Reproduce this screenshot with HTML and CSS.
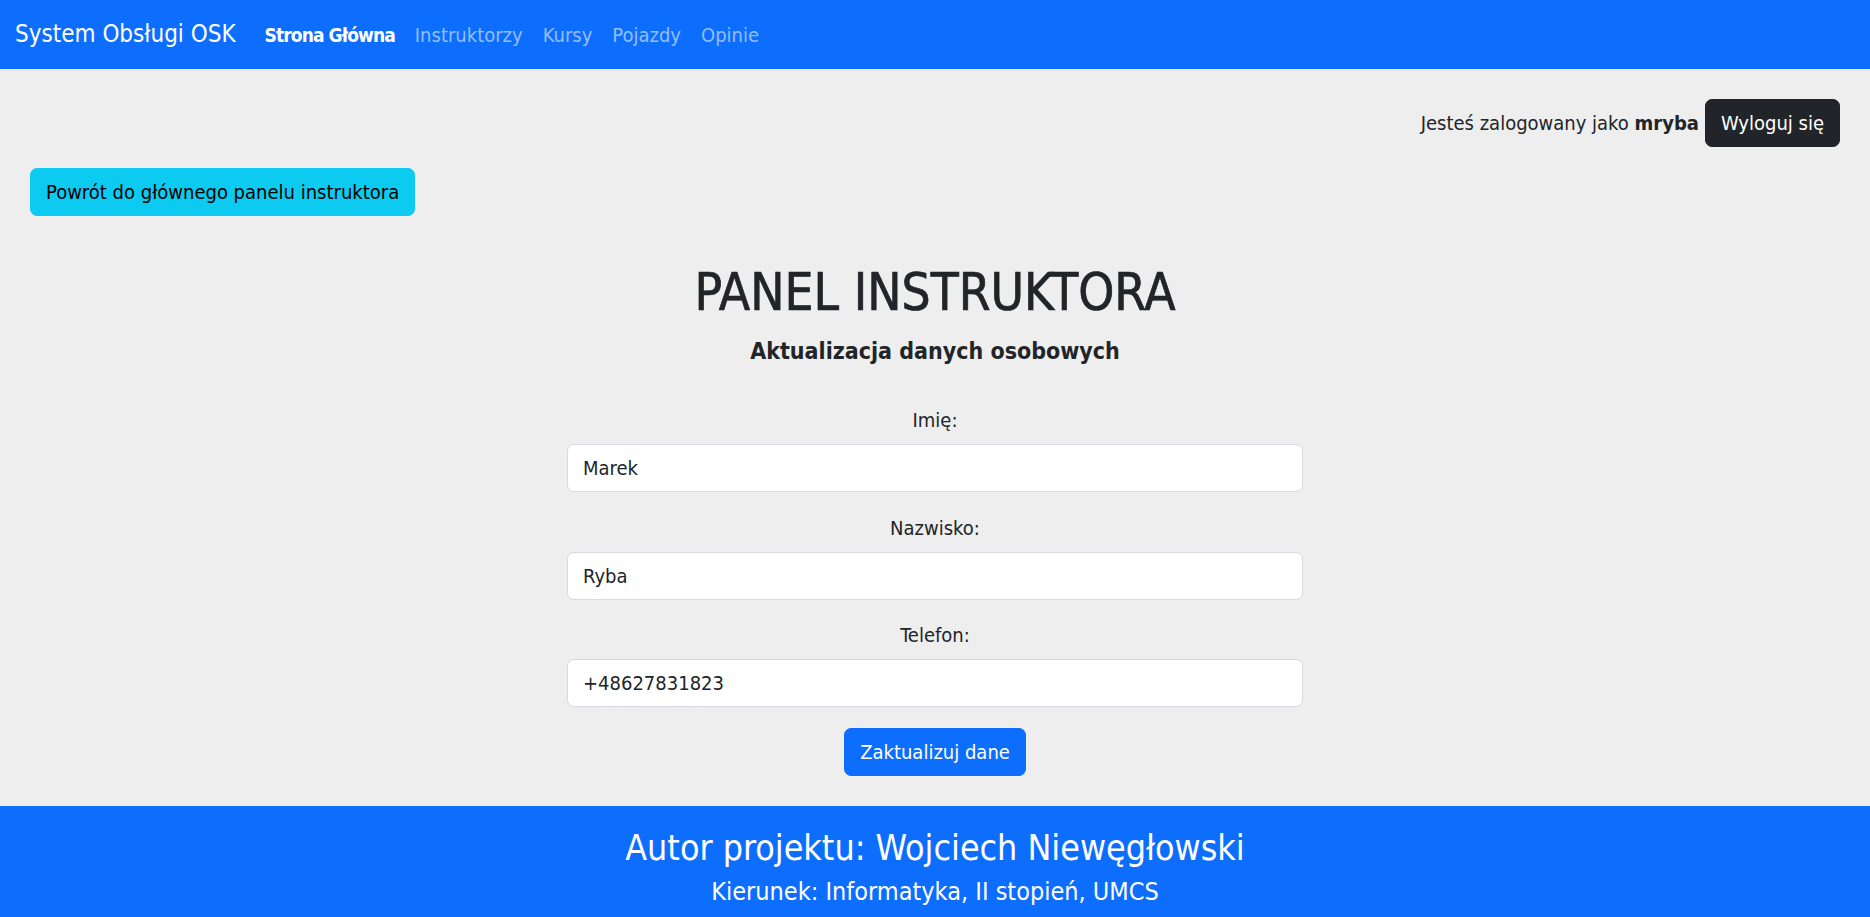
FILE: index.html
```html
<!DOCTYPE html>
<html lang="pl">
<head>
<meta charset="utf-8">
<title>System Obsługi OSK</title>
<link rel="stylesheet" href="styles.css">
</head>
<body>
<nav class="navbar">
  <a class="brand" href="#">System Obsługi OSK</a>
  <ul class="nav">
    <li><a class="nav-link active" href="#">Strona Główna</a></li>
    <li><a class="nav-link" href="#">Instruktorzy</a></li>
    <li><a class="nav-link" href="#">Kursy</a></li>
    <li><a class="nav-link" href="#">Pojazdy</a></li>
    <li><a class="nav-link" href="#">Opinie</a></li>
  </ul>
</nav>
<main class="main">
  <div class="user-row">
    <span class="user-text">Jesteś zalogowany jako <b>mryba</b></span>
    <button class="btn btn-dark">Wyloguj się</button>
  </div>
  <div class="back-row">
    <button class="btn btn-info">Powrót do głównego panelu instruktora</button>
  </div>
  <section class="panel">
    <h1 class="title">PANEL INSTRUKTORA</h1>
    <h5 class="subtitle">Aktualizacja danych osobowych</h5>
    <form class="form">
      <label class="label" for="imie">Imię:</label>
      <input class="input" id="imie" type="text" value="Marek">
      <label class="label" for="nazwisko">Nazwisko:</label>
      <input class="input" id="nazwisko" type="text" value="Ryba">
      <label class="label" for="telefon">Telefon:</label>
      <input class="input" id="telefon" type="text" value="+48627831823">
      <button type="button" class="btn btn-primary">Zaktualizuj dane</button>
    </form>
  </section>
</main>
<footer class="footer">
  <h3 class="footer-title">Autor projektu: Wojciech Niewęgłowski</h3>
  <h5 class="footer-sub">Kierunek: Informatyka, II stopień, UMCS</h5>
</footer>
</body>
</html>
```
FILE: styles.css
```css
* { box-sizing: border-box; }
html, body { margin: 0; padding: 0; }
body {
  background: #eeeeee;
  color: #212529;
  font-family: "DejaVu Sans Condensed", "DejaVu Sans", sans-serif;
  font-stretch: condensed;
  font-size: 20px;
  line-height: 1.5;
}
.navbar {
  display: flex;
  align-items: center;
  background: #0d6efd;
  padding: 10px 15px;
  height: 69px;
}
.brand {
  color: #fff;
  text-decoration: none;
  font-size: 24px;
  line-height: 37px;
  margin-right: 19px;
}
.nav {
  display: flex;
  list-style: none;
  margin: 0;
  padding: 0;
}
.nav-link {
  display: block;
  padding: 8px 10px;
  color: #92befe;
  text-decoration: none;
  font-size: 20px;
  line-height: 30px;
}
.nav-link.active {
  color: #fff;
  font-weight: bold;
  font-size: 19px;
  letter-spacing: -0.9px;
}
.main { padding: 0 30px; }
.user-row {
  display: flex;
  justify-content: flex-end;
  align-items: center;
  gap: 6px;
  padding-top: 30px;
}
.back-row { padding-top: 21px; }
.btn {
  font-family: inherit;
  font-stretch: condensed;
  font-size: 20px;
  line-height: 30px;
  padding: 8px 15px;
  border: 1px solid transparent;
  border-radius: 7px;
  cursor: pointer;
}
.btn-dark { background: #212529; color: #fff; border-color: #212529; }
.btn-info { background: #0dcaf0; color: #000; border-color: #0dcaf0; }
.btn-primary { background: #0d6efd; color: #fff; border-color: #0d6efd; }
.panel {
  display: flex;
  flex-direction: column;
  align-items: center;
  padding-top: 47px;
}
.title {
  margin: 0 0 13px;
  font-size: 51px;
  line-height: 60px;
  font-weight: normal;
  -webkit-text-stroke: 0.7px #212529;
}
.subtitle {
  margin: 0 0 39px;
  font-size: 23px;
  line-height: 30px;
  font-weight: bold;
}
.form {
  width: 736px;
  display: flex;
  flex-direction: column;
  align-items: center;
}
.label {
  display: block;
  margin-bottom: 9px;
}
.input {
  display: block;
  width: 100%;
  font-family: inherit;
  font-stretch: condensed;
  font-size: 20px;
  line-height: 30px;
  color: #212529;
  background: #fff;
  padding: 8px 15px;
  border: 1px solid #d6d9dd;
  border-radius: 7px;
  margin-bottom: 20.6px;
}
.footer {
  margin-top: 30px;
  background: #0d6efd;
  color: #fff;
  text-align: center;
  padding: 21px 0 20px;
}
.footer-title {
  margin: 0 0 8px;
  font-size: 35.5px;
  line-height: 42px;
  font-weight: normal;
}
.footer-sub {
  margin: 0;
  font-size: 25px;
  line-height: 30px;
  font-weight: normal;
}
```
